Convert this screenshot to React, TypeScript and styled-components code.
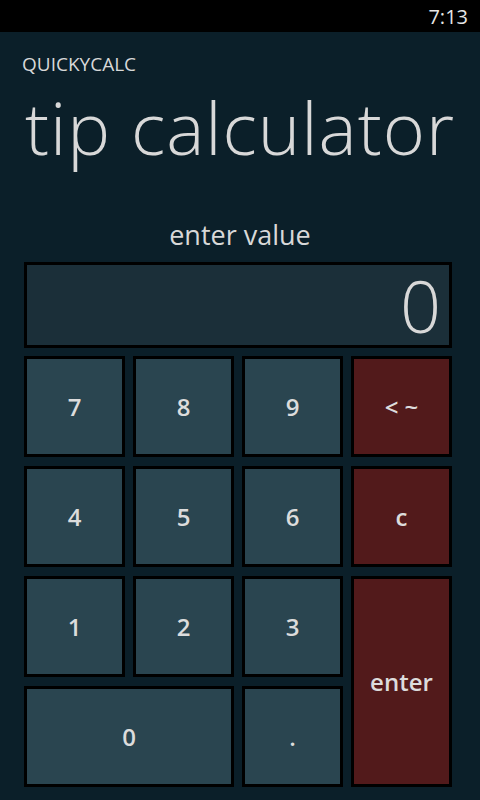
import React from "react";
import styled, { createGlobalStyle } from "styled-components";

const Global = createGlobalStyle`
  html, body { margin: 0; padding: 0; background: #0b1f29; }
  body { font-family: "Open Sans", "Noto Sans", sans-serif; color: #dcdcdc; }
  * { box-sizing: border-box; }
`;

const Page = styled.div`
  width: 480px;
  height: 800px;
  background: #0b1f29;
  display: flex;
  flex-direction: column;
  overflow: hidden;
`;

const StatusBar = styled.div`
  height: 32px;
  background: #000;
  display: flex;
  align-items: center;
  justify-content: flex-end;
  padding-right: 12px;
  font-size: 20px;
  color: #e6e6e6;
`;

const AppTitle = styled.div`
  margin: 20px 0 0 22px;
  font-size: 19px;
  line-height: 24px;
  color: #d8d8d8;
`;

const PageTitle = styled.h1`
  margin: 6px 0 0 25px;
  font-size: 72px;
  font-weight: 300;
  line-height: 90px;
  letter-spacing: 1px;
  color: #d8d8d8;
`;

const Prompt = styled.div`
  margin-top: 45px;
  text-align: center;
  font-size: 27px;
  line-height: 36px;
  color: #d8d8d8;
`;

const Pad = styled.div`
  margin: 9px 0 0 24px;
  width: 427px;
  display: grid;
  grid-template-columns: repeat(4, 101px);
  grid-template-rows: 85px repeat(4, 101px);
  column-gap: 8px;
  row-gap: 9px;
`;

const Display = styled.div`
  grid-column: 1 / 5;
  margin-bottom: -1px;
  border: 3px solid #000;
  background: #1b2f39;
  display: flex;
  align-items: center;
  justify-content: flex-end;
  padding-right: 8px;
  font-size: 72px;
  font-weight: 300;
  color: #d8d8d8;
  line-height: 1;
`;

const Key = styled.div<{ $red?: boolean; $span?: number; $rows?: number }>`
  border: 3px solid #000;
  background: ${(p) => (p.$red ? "#521a1b" : "#2a4550")};
  grid-column: span ${(p) => p.$span ?? 1};
  grid-row: span ${(p) => p.$rows ?? 1};
  display: flex;
  align-items: center;
  justify-content: center;
  font-size: 24px;
  font-weight: 600;
  color: #dcdcdc;
  white-space: pre;
`;

export default function App() {
  return (
    <Page>
      <Global />
      <StatusBar>7:13</StatusBar>
      <AppTitle>QUICKYCALC</AppTitle>
      <PageTitle>tip calculator</PageTitle>
      <Prompt>enter value</Prompt>
      <Pad>
        <Display>0</Display>
        <Key>7</Key>
        <Key>8</Key>
        <Key>9</Key>
        <Key $red>{"< ~"}</Key>
        <Key>4</Key>
        <Key>5</Key>
        <Key>6</Key>
        <Key $red>c</Key>
        <Key>1</Key>
        <Key>2</Key>
        <Key>3</Key>
        <Key $red $rows={2}>enter</Key>
        <Key $span={2}>0</Key>
        <Key>.</Key>
      </Pad>
    </Page>
  );
}
